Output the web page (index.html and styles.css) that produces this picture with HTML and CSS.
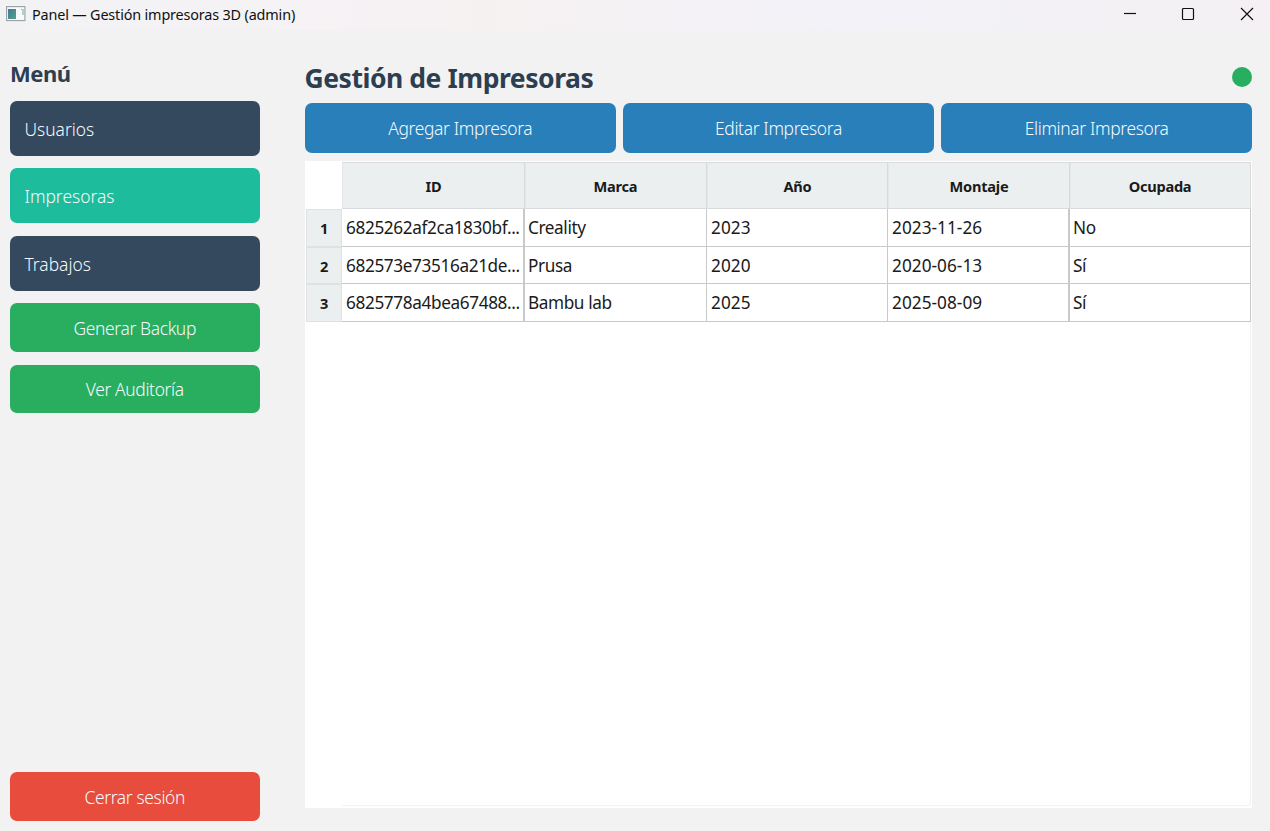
FILE: index.html
```html
<!DOCTYPE html>
<html lang="es">
<head>
<meta charset="utf-8">
<title>Panel — Gestión impresoras 3D (admin)</title>
<link rel="stylesheet" href="styles.css">
</head>
<body>
<header class="titlebar">
  <svg class="app-icon" width="20" height="16" viewBox="0 0 20 16"><defs><linearGradient id="g" x1="0" y1="0" x2="1" y2="1"><stop offset="0" stop-color="#42799a"/><stop offset="1" stop-color="#55a184"/></linearGradient></defs><rect x=".6" y=".6" width="18.3" height="14" fill="#f7fafa" stroke="#999fa2" stroke-width="1.1"/><rect x="2" y="3" width="8" height="10" fill="url(#g)"/><path d="M15 3.5h1M17 3v6" stroke="#84b5a7" stroke-width="1.2" fill="none"/></svg>
  <span class="window-title">Panel — Gestión impresoras 3D (admin)</span>
  <div class="window-controls">
    <svg width="14" height="14" viewBox="0 0 14 14"><path d="M1 6.5h12"/></svg>
    <svg width="14" height="14" viewBox="0 0 14 14"><rect x="1.5" y="1.5" width="11" height="11" rx="1"/></svg>
    <svg width="14" height="14" viewBox="0 0 14 14"><path d="M1 1l12 12M13 1L1 13"/></svg>
  </div>
</header>
<div class="layout">
  <nav class="sidebar">
    <h2 class="menu-title">Menú</h2>
    <button class="nav">Usuarios</button>
    <button class="nav active">Impresoras</button>
    <button class="nav">Trabajos</button>
    <button class="action">Generar Backup</button>
    <button class="action">Ver Auditoría</button>
    <button class="action logout">Cerrar sesión</button>
  </nav>
  <main class="main">
    <div class="heading"><h1 class="page-title">Gestión de Impresoras</h1><span class="status"></span></div>
    <div class="toolbar">
      <button class="tool">Agregar Impresora</button>
      <button class="tool">Editar Impresora</button>
      <button class="tool">Eliminar Impresora</button>
    </div>
    <div class="table-view">
      <div class="row head"><span class="corner"></span><span>ID</span><span>Marca</span><span>Año</span><span>Montaje</span><span>Ocupada</span></div>
      <div class="row"><span class="index">1</span><span class="hash">6825262af2ca1830bf...</span><span>Creality</span><span class="date">2023</span><span class="date">2023-11-26</span><span>No</span></div>
      <div class="row middle"><span class="index">2</span><span class="hash">682573e73516a21de...</span><span>Prusa</span><span class="date">2020</span><span class="date">2020-06-13</span><span>Sí</span></div>
      <div class="row"><span class="index">3</span><span class="hash">6825778a4bea67488...</span><span>Bambu lab</span><span class="date">2025</span><span class="date">2025-08-09</span><span>Sí</span></div>
      <div class="table-rest"></div>
    </div>
  </main>
</div>
</body>
</html>
```
FILE: styles.css
```css
* { box-sizing: border-box; }
body { margin: 0; width: 1270px; height: 831px; overflow: hidden; display: flex; flex-direction: column; background: #f2f2f2; font-family: "Segoe UI", "Noto Sans", sans-serif; color: #1a1a1a; }
h1, h2 { margin: 0; color: #2c3e50; }
.titlebar { height: 30px; flex: none; display: flex; align-items: flex-start; padding: 6px 16px 0 6px; background: linear-gradient(90deg, #f2f2f4 0%, #f6f2f5 25%, #f6f1f1 38%, #f2f2f8 65%, #f4f0f3 100%); }
.window-title { margin: -2px 0 0 6px; font-size: 14.4px; line-height: 22px; letter-spacing: -.16px; color: #111; white-space: nowrap; }
.window-controls { margin: 1px 0 0 auto; display: flex; gap: 44.5px; }
.window-controls svg { fill: none; stroke: #111; stroke-width: 1.2; }
.window-controls svg:nth-child(2) { margin: 0 .5px 0 -.5px; }
.layout { flex: 1; display: flex; gap: 45.5px; padding: 0 18px 0 10px; }
.sidebar { width: 249.5px; flex: none; display: flex; flex-direction: column; gap: 12.75px; padding: 30px 0 10.5px; }
.menu-title { height: 28px; line-height: 27px; font-size: 22px; letter-spacing: -.5px; }
button { border: 0; border-radius: 7px; color: #f5faff; font-family: inherit; font-size: 17.4px; font-weight: 350; letter-spacing: -.35px; white-space: nowrap; padding: 0; }
.nav { height: 54.8px; flex: none; text-align: left; padding-left: 14.5px; padding-top: 1px; background: #34495e; letter-spacing: 0; }
.active { background: #1dbc9c; }
.action { height: 48.5px; flex: none; background: #29ae60; padding-top: 1px; }
.logout { margin-top: auto; background: #e74c3c; }
.main { flex: 1; min-width: 0; display: flex; flex-direction: column; padding: 30px 0 23px; }
.heading { height: 43px; display: flex; justify-content: space-between; align-items: flex-start; }
.page-title { font-size: 26.5px; line-height: 36px; letter-spacing: -.45px; white-space: nowrap; margin-left: -.5px; }
.status { width: 20px; height: 20px; margin-top: 7px; border-radius: 50%; background: #27ae60; }
.toolbar { display: grid; grid-template-columns: 1fr 1fr 1fr; gap: 7.5px; height: 50px; }
.tool { background: #297fb9; }
.table-view { flex: 1; margin-top: 8px; padding: 1px 1px 2px; background: #fff; display: flex; flex-direction: column; }
.row { display: grid; grid-template-columns: 36px 183px 182px 181px 182px 1fr; height: 38px; font-size: 17.2px; }
.row.middle { height: 37px; }
.row span { border-right: 1px solid #c8caca; border-bottom: 1px solid #c8caca; padding: 0 4px; line-height: 37px; white-space: nowrap; overflow: hidden; letter-spacing: -.4px; }
.row span:nth-child(2), .row span:nth-child(5) { border-right-width: 2px; }
.row span:nth-child(3), .row span:last-child { padding-left: 3px; }
.row .date { letter-spacing: .05px; }
.row .hash { letter-spacing: -.37px; }
.row.head { height: 47px; }
.row.head span { text-align: center; font-size: 14.6px; font-weight: 700; line-height: 46px; background: #ebeff0; border: 1px solid #d8dadb; border-left-color: #e4e6e7; letter-spacing: -.25px; }
.row.head .corner { background: #fff; border-color: #fff; }
.row .index { text-align: center; font-size: 14.6px; font-weight: 700; background: #ebeff0; border: 1px solid #dfe1e2; line-height: 36px; }
.table-rest { flex: 1; margin-left: 36px; border: solid #f2f2f2; border-width: 0 1px 1px 0; border-radius: 0 0 4px 0; }
```
